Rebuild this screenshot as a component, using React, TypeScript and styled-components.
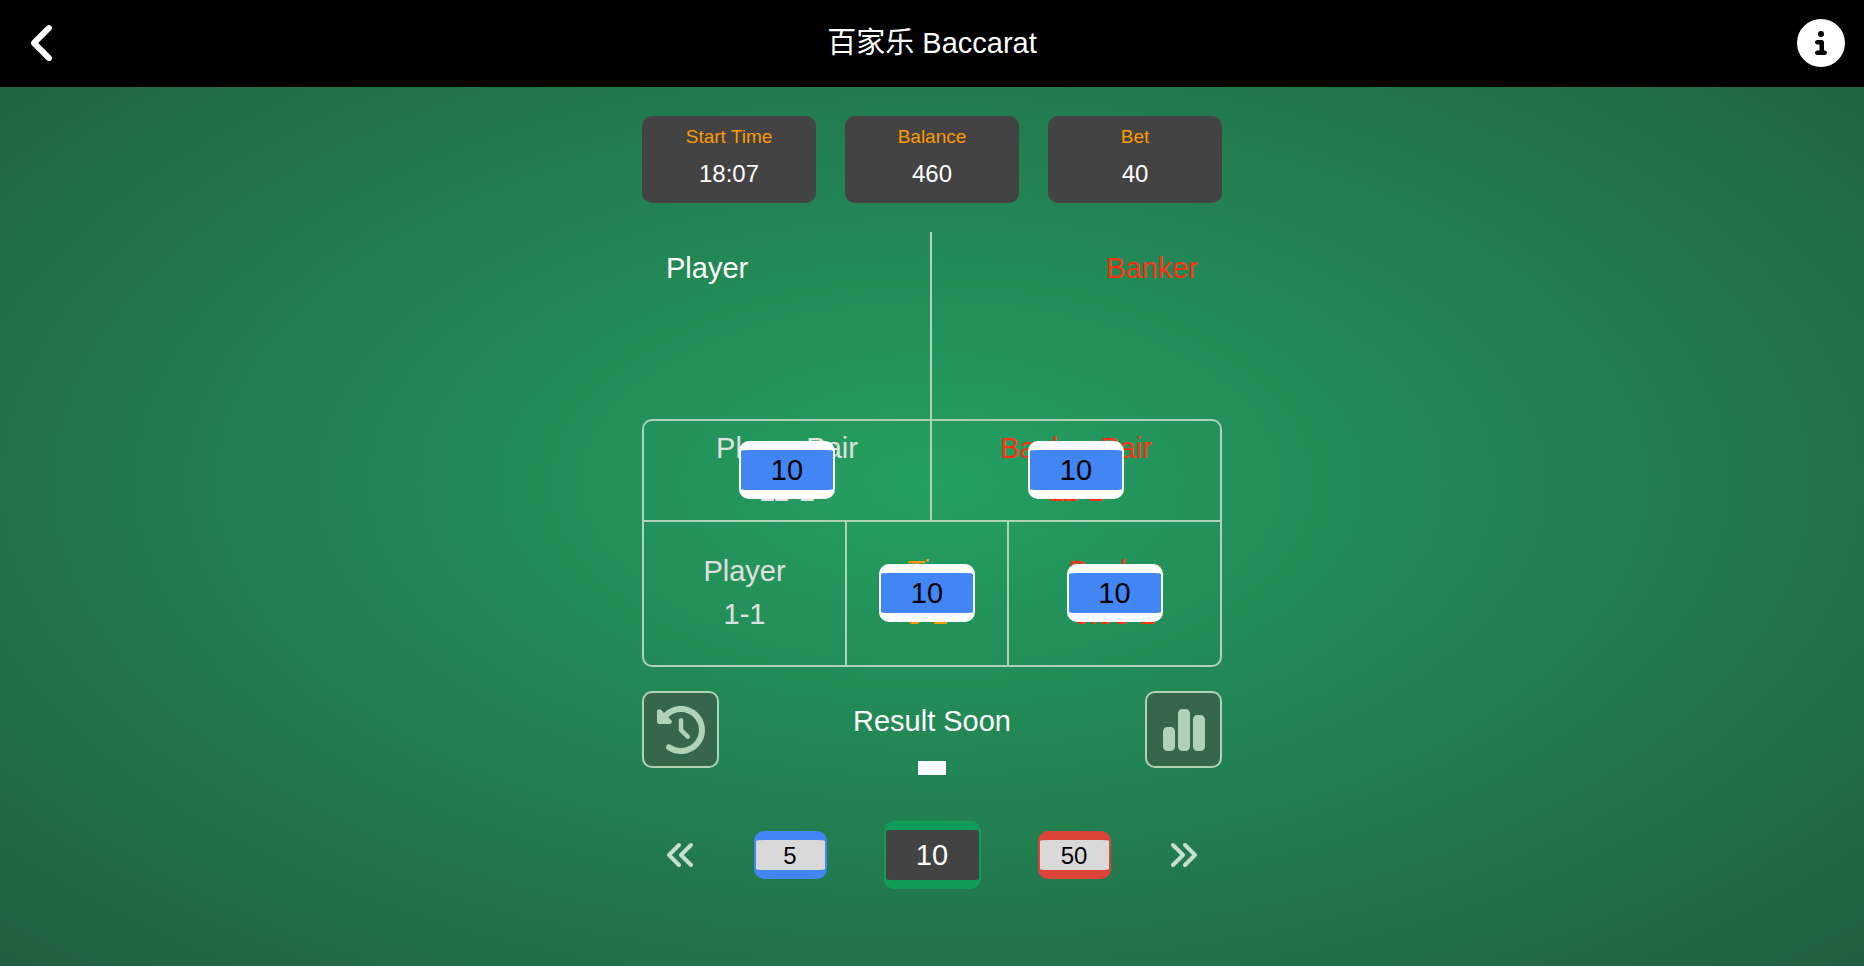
import React from "react";
import styled, { createGlobalStyle } from "styled-components";
import {
  FaAngleLeft,
  FaAnglesLeft,
  FaAnglesRight,
  FaChartSimple,
  FaCircleInfo,
  FaClockRotateLeft,
} from "react-icons/fa6";

const LINE = "#b0d3b8";
const PLAYER = "#e0e0e0";
const BANKER = "#ff3311";
const TIE = "#ff9900";

const GlobalStyle = createGlobalStyle`
  *, *::before, *::after { box-sizing: border-box; }
  body {
    margin: 0;
    font-family: "Liberation Sans", "Noto Sans CJK SC", sans-serif;
    font-size: 29px;
    line-height: 43px;
    color: #ffffff;
  }
  h1, h2, p, dl, dt, dd { margin: 0; font-size: inherit; font-weight: 400; }
  button {
    margin: 0;
    padding: 0;
    border: 0;
    background: none;
    color: inherit;
    font: inherit;
    cursor: pointer;
  }
`;

const Page = styled.div`
  display: flex;
  flex-direction: column;
  min-height: 100vh;
  background: radial-gradient(#24a062, #205f3f);
`;

const Header = styled.header`
  display: flex;
  align-items: center;
  justify-content: space-between;
  padding: 0 19px;
  height: 87px;
  background: #000000;
`;

const HeaderButton = styled.button`
  display: flex;
  align-items: center;
  justify-content: center;
  width: 48px;
  height: 48px;
  margin-bottom: 1px;
  font-size: 48px;
`;

const Table = styled.main`
  display: flex;
  flex-direction: column;
  width: 100%;
  max-width: 580px;
  margin: 0 auto;
  padding: 29px 0;
`;

const Stats = styled.dl`
  display: grid;
  grid-template-columns: repeat(3, 1fr);
  gap: 29px;
`;

const Stat = styled.div`
  height: 87px;
  padding-top: 6px;
  border-radius: 10px;
  background: #434343;
  text-align: center;
`;

const StatLabel = styled.dt`
  font-size: 19px;
  line-height: 29px;
  color: ${TIE};
`;

const StatValue = styled.dd`
  padding-top: 5px;
  font-size: 24px;
  line-height: 36px;
`;

const Hands = styled.section`
  display: grid;
  grid-template-columns: 1fr 1fr;
  height: 187px;
  margin-top: 29px;
`;

const Hand = styled.div<{ $side: "left" | "right" }>`
  padding: 15px 24px;
  text-align: ${(p) => p.$side};
  color: ${(p) => (p.$side === "right" ? BANKER : "inherit")};
  border-right: ${(p) => (p.$side === "left" ? `2px solid ${LINE}` : "0")};
`;

const Board = styled.section`
  border: 2px solid ${LINE};
  border-radius: 10px;
`;

const BetRow = styled.div<{ $columns: string; $height: number }>`
  display: grid;
  grid-template-columns: ${(p) => p.$columns};
  height: ${(p) => p.$height}px;

  & + & {
    border-top: 2px solid ${LINE};
  }
`;

const BetCell = styled.button<{ $color: string }>`
  position: relative;
  display: flex;
  flex-direction: column;
  align-items: center;
  justify-content: center;
  padding-bottom: 1px;
  color: ${(p) => p.$color};

  &:not(:last-child) {
    border-right: 2px solid ${LINE};
  }
`;

type ChipSize = "small" | "bet" | "large";

const Chip = styled.span<{ $edge: string; $face: string; $ink: string; $size: ChipSize }>`
  display: flex;
  align-items: center;
  justify-content: center;
  width: ${(p) => ({ small: 73, bet: 96, large: 97 })[p.$size]}px;
  height: ${(p) => ({ small: 48, bet: 58, large: 68 })[p.$size]}px;
  border: solid ${(p) => p.$edge};
  border-width: 9px 2px;
  border-radius: 10px;
  background: ${(p) => p.$face};
  color: ${(p) => p.$ink};
  font-size: ${(p) => (p.$size === "small" ? 24 : 29)}px;
`;

const Placed = styled.span`
  position: absolute;
  inset: 0;
  display: flex;
  align-items: center;
  justify-content: center;
  padding-bottom: 1px;
`;

const StatusRow = styled.section`
  display: flex;
  align-items: flex-start;
  justify-content: space-between;
  height: 77px;
  margin-top: 24px;
`;

const SquareButton = styled.button`
  display: flex;
  align-items: center;
  justify-content: center;
  width: 77px;
  height: 77px;
  border: 2px solid ${LINE};
  border-radius: 10px;
  background: #36664b;
  color: ${LINE};
  font-size: 48px;
`;

const Status = styled.div`
  display: flex;
  flex-direction: column;
  align-items: center;
  gap: 18px;
  padding-top: 9px;
`;

const Countdown = styled.span`
  width: 28px;
  height: 14px;
  background: #ffffff;
`;

const ChipRow = styled.section`
  display: grid;
  grid-template-columns: 77px 1fr 1fr 1fr 77px;
  align-items: center;
  justify-items: center;
  height: 78px;
  margin-top: 48px;
`;

const ArrowButton = styled.button<{ $side: "start" | "end" }>`
  display: flex;
  align-items: center;
  justify-content: center;
  justify-self: ${(p) => p.$side};
  width: 76px;
  height: 76px;
  color: #c8ded0;
  font-size: 32px;
`;

type Bet = { name: string; odds: string; color: string; stake?: number };

const pairBets: Bet[] = [
  { name: "Player Pair", odds: "11-1", color: PLAYER, stake: 10 },
  { name: "Banker Pair", odds: "11-1", color: BANKER, stake: 10 },
];

const mainBets: Bet[] = [
  { name: "Player", odds: "1-1", color: PLAYER },
  { name: "Tie", odds: "8-1", color: TIE, stake: 10 },
  { name: "Banker", odds: "0.95-1", color: BANKER, stake: 10 },
];

const stats = [
  { label: "Start Time", value: "18:07" },
  { label: "Balance", value: "460" },
  { label: "Bet", value: "40" },
];

function BetButton({ bet }: { bet: Bet }) {
  return (
    <BetCell type="button" $color={bet.color}>
      <span>{bet.name}</span>
      <span>{bet.odds}</span>
      {bet.stake !== undefined && (
        <Placed>
          <Chip $size="bet" $edge="#ffffff" $face="#4285f4" $ink="#000000">
            {bet.stake}
          </Chip>
        </Placed>
      )}
    </BetCell>
  );
}

export default function App() {
  return (
    <Page>
      <GlobalStyle />
      <Header>
        <HeaderButton type="button" aria-label="Back">
          <FaAngleLeft />
        </HeaderButton>
        <h1>百家乐 Baccarat</h1>
        <HeaderButton type="button" aria-label="Information">
          <FaCircleInfo />
        </HeaderButton>
      </Header>
      <Table>
        <Stats>
          {stats.map((s) => (
            <Stat key={s.label}>
              <StatLabel>{s.label}</StatLabel>
              <StatValue>{s.value}</StatValue>
            </Stat>
          ))}
        </Stats>
        <Hands>
          <Hand $side="left">
            <h2>Player</h2>
          </Hand>
          <Hand $side="right">
            <h2>Banker</h2>
          </Hand>
        </Hands>
        <Board>
          <BetRow $columns="1fr 1fr" $height={99}>
            {pairBets.map((b) => (
              <BetButton key={b.name} bet={b} />
            ))}
          </BetRow>
          <BetRow $columns="203fr 162fr 211fr" $height={145}>
            {mainBets.map((b) => (
              <BetButton key={b.name} bet={b} />
            ))}
          </BetRow>
        </Board>
        <StatusRow>
          <SquareButton type="button" aria-label="History">
            <FaClockRotateLeft />
          </SquareButton>
          <Status>
            <p>Result Soon</p>
            <Countdown />
          </Status>
          <SquareButton type="button" aria-label="Statistics">
            <FaChartSimple />
          </SquareButton>
        </StatusRow>
        <ChipRow>
          <ArrowButton type="button" aria-label="Previous chips" $side="end">
            <FaAnglesLeft />
          </ArrowButton>
          <button type="button">
            <Chip $size="small" $edge="#4285f4" $face="#d9d9d9" $ink="#000000">5</Chip>
          </button>
          <button type="button">
            <Chip $size="large" $edge="#0f9d58" $face="#434343" $ink="#ffffff">10</Chip>
          </button>
          <button type="button">
            <Chip $size="small" $edge="#db4437" $face="#d9d9d9" $ink="#000000">50</Chip>
          </button>
          <ArrowButton type="button" aria-label="Next chips" $side="start">
            <FaAnglesRight />
          </ArrowButton>
        </ChipRow>
      </Table>
    </Page>
  );
}
